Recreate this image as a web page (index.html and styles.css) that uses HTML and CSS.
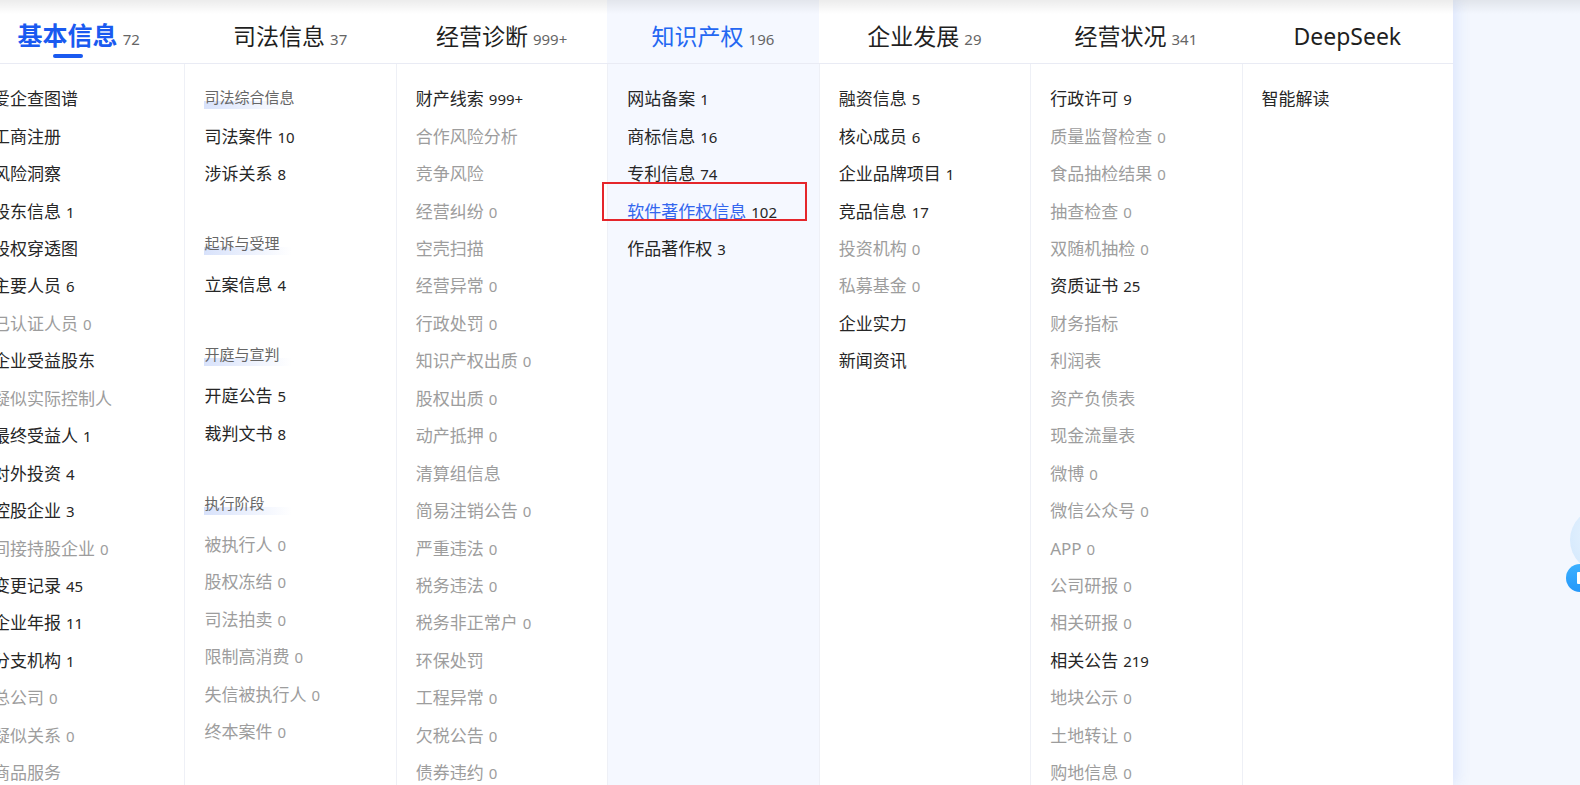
FILE: index.html
```html
<!DOCTYPE html>
<html lang="zh-CN">
<head>
<meta charset="utf-8">
<title>企业信息导航</title>
<link rel="stylesheet" href="styles.css">
</head>
<body>
<div class="topshade"></div>
<div class="panel">
  <section class="col">
    <div class="tab"><span class="tab-title active">基本信息</span><span class="tab-count">72</span></div>
    <ul class="list">
      <li class="item">爱企查图谱</li>
      <li class="item">工商注册</li>
      <li class="item">风险洞察</li>
      <li class="item">股东信息<span class="num">1</span></li>
      <li class="item">股权穿透图</li>
      <li class="item">主要人员<span class="num">6</span></li>
      <li class="item muted">已认证人员<span class="num">0</span></li>
      <li class="item">企业受益股东</li>
      <li class="item muted">疑似实际控制人</li>
      <li class="item">最终受益人<span class="num">1</span></li>
      <li class="item">对外投资<span class="num">4</span></li>
      <li class="item">控股企业<span class="num">3</span></li>
      <li class="item muted">间接持股企业<span class="num">0</span></li>
      <li class="item">变更记录<span class="num">45</span></li>
      <li class="item">企业年报<span class="num">11</span></li>
      <li class="item">分支机构<span class="num">1</span></li>
      <li class="item muted">总公司<span class="num">0</span></li>
      <li class="item muted">疑似关系<span class="num">0</span></li>
      <li class="item muted">商品服务</li>
    </ul>
  </section>
  <section class="col">
    <div class="tab"><span class="tab-title">司法信息</span><span class="tab-count">37</span></div>
    <ul class="list">
      <li class="group-title first">司法综合信息</li>
      <li class="item">司法案件<span class="num">10</span></li>
      <li class="item">涉诉关系<span class="num">8</span></li>
      <li class="group-title">起诉与受理</li>
      <li class="item">立案信息<span class="num">4</span></li>
      <li class="group-title">开庭与宣判</li>
      <li class="item">开庭公告<span class="num">5</span></li>
      <li class="item">裁判文书<span class="num">8</span></li>
      <li class="group-title">执行阶段</li>
      <li class="item muted">被执行人<span class="num">0</span></li>
      <li class="item muted">股权冻结<span class="num">0</span></li>
      <li class="item muted">司法拍卖<span class="num">0</span></li>
      <li class="item muted">限制高消费<span class="num">0</span></li>
      <li class="item muted">失信被执行人<span class="num">0</span></li>
      <li class="item muted">终本案件<span class="num">0</span></li>
    </ul>
  </section>
  <section class="col">
    <div class="tab"><span class="tab-title">经营诊断</span><span class="tab-count">999+</span></div>
    <ul class="list">
      <li class="item">财产线索<span class="num">999+</span></li>
      <li class="item muted">合作风险分析</li>
      <li class="item muted">竞争风险</li>
      <li class="item muted">经营纠纷<span class="num">0</span></li>
      <li class="item muted">空壳扫描</li>
      <li class="item muted">经营异常<span class="num">0</span></li>
      <li class="item muted">行政处罚<span class="num">0</span></li>
      <li class="item muted">知识产权出质<span class="num">0</span></li>
      <li class="item muted">股权出质<span class="num">0</span></li>
      <li class="item muted">动产抵押<span class="num">0</span></li>
      <li class="item muted">清算组信息</li>
      <li class="item muted">简易注销公告<span class="num">0</span></li>
      <li class="item muted">严重违法<span class="num">0</span></li>
      <li class="item muted">税务违法<span class="num">0</span></li>
      <li class="item muted">税务非正常户<span class="num">0</span></li>
      <li class="item muted">环保处罚</li>
      <li class="item muted">工程异常<span class="num">0</span></li>
      <li class="item muted">欠税公告<span class="num">0</span></li>
      <li class="item muted">债券违约<span class="num">0</span></li>
    </ul>
  </section>
  <section class="col hover">
    <div class="tab"><span class="tab-title hl">知识产权</span><span class="tab-count">196</span></div>
    <ul class="list">
      <li class="item">网站备案<span class="num">1</span></li>
      <li class="item">商标信息<span class="num">16</span></li>
      <li class="item">专利信息<span class="num">74</span></li>
      <li class="item link">软件著作权信息<span class="num">102</span></li>
      <li class="item">作品著作权<span class="num">3</span></li>
    </ul>
  </section>
  <section class="col">
    <div class="tab"><span class="tab-title">企业发展</span><span class="tab-count">29</span></div>
    <ul class="list">
      <li class="item">融资信息<span class="num">5</span></li>
      <li class="item">核心成员<span class="num">6</span></li>
      <li class="item">企业品牌项目<span class="num">1</span></li>
      <li class="item">竞品信息<span class="num">17</span></li>
      <li class="item muted">投资机构<span class="num">0</span></li>
      <li class="item muted">私募基金<span class="num">0</span></li>
      <li class="item">企业实力</li>
      <li class="item">新闻资讯</li>
    </ul>
  </section>
  <section class="col">
    <div class="tab"><span class="tab-title">经营状况</span><span class="tab-count">341</span></div>
    <ul class="list">
      <li class="item">行政许可<span class="num">9</span></li>
      <li class="item muted">质量监督检查<span class="num">0</span></li>
      <li class="item muted">食品抽检结果<span class="num">0</span></li>
      <li class="item muted">抽查检查<span class="num">0</span></li>
      <li class="item muted">双随机抽检<span class="num">0</span></li>
      <li class="item">资质证书<span class="num">25</span></li>
      <li class="item muted">财务指标</li>
      <li class="item muted">利润表</li>
      <li class="item muted">资产负债表</li>
      <li class="item muted">现金流量表</li>
      <li class="item muted">微博<span class="num">0</span></li>
      <li class="item muted">微信公众号<span class="num">0</span></li>
      <li class="item muted">APP<span class="num">0</span></li>
      <li class="item muted">公司研报<span class="num">0</span></li>
      <li class="item muted">相关研报<span class="num">0</span></li>
      <li class="item">相关公告<span class="num">219</span></li>
      <li class="item muted">地块公示<span class="num">0</span></li>
      <li class="item muted">土地转让<span class="num">0</span></li>
      <li class="item muted">购地信息<span class="num">0</span></li>
    </ul>
  </section>
  <section class="col">
    <div class="tab"><span class="tab-title">DeepSeek</span></div>
    <ul class="list">
      <li class="item">智能解读</li>
    </ul>
  </section>
</div>
<div class="bubble"></div>
<div class="fab"><span class="fab-glyph"></span></div>
</body>
</html>
```

FILE: styles.css
```css
html, body {
  margin: 0;
  padding: 0;
}
body {
  width: 1580px;
  height: 785px;
  overflow: hidden;
  position: relative;
  background: #f3f7fe;
  font-family: "Noto Sans", "Noto Sans CJK SC", sans-serif;
}
.topshade {
  position: absolute;
  top: 0;
  left: 0;
  width: 1580px;
  height: 14px;
  background: linear-gradient(rgba(0, 0, 0, 0.075), rgba(0, 0, 0, 0));
  pointer-events: none;
  z-index: 5;
}
.panel {
  margin-left: -27px;
  width: 1480px;
  height: 785px;
  background: #fff;
  display: grid;
  grid-template-columns: repeat(7, 1fr);
  box-shadow: 3px 0 14px rgba(70, 120, 240, 0.14);
  position: relative;
  z-index: 1;
}
.col {
  display: flex;
  flex-direction: column;
  min-width: 0;
}
.col.hover {
  background: #f5f8ff;
}
.tab {
  height: 64px;
  box-sizing: border-box;
  padding-top: 16px;
  line-height: 47px;
  text-align: center;
  white-space: nowrap;
  border-bottom: 1px solid #e9ebf4;
}
.tab-title {
  display: inline-block;
  position: relative;
  font-size: 23px;
  line-height: 30px;
  color: #1f1f1f;
}
.tab-title.active {
  font-size: 25px;
  font-weight: 700;
  color: #1a5af0;
}
.tab-title.active::after {
  content: "";
  position: absolute;
  left: 50%;
  top: calc(100% + 4px);
  width: 30px;
  height: 4px;
  margin-left: -15px;
  border-radius: 2px;
  background: #1a5af0;
}
.tab-title.hl {
  color: #2467f2;
}
.tab-count {
  font-size: 15px;
  line-height: 30px;
  color: #666;
  margin-left: 5px;
}
.list {
  list-style: none;
  margin: 0;
  padding: 16.3px 0 0;
  flex: 1;
  border-left: 1px solid #eef0f6;
}
.item {
  height: 37.45px;
  line-height: 37.45px;
  padding-left: 19px;
  font-size: 17px;
  color: #262626;
  white-space: nowrap;
}
.item .num {
  font-size: 15px;
  margin-left: 5px;
}
.item.muted {
  color: #9d9d9d;
}
.item.link {
  color: #3366ee;
  position: relative;
}
.item.link .num {
  color: #262626;
}
.item.link::after {
  content: "";
  position: absolute;
  left: -6px;
  top: -11px;
  width: 205px;
  height: 39px;
  box-sizing: border-box;
  border: 2px solid #e5262b;
}
.group-title {
  height: 22px;
  box-sizing: border-box;
  padding-bottom: 2px;
  margin: 40.3px 0 11.3px 19px;
  font-size: 15px;
  line-height: 20px;
  color: #666;
  white-space: nowrap;
  background: linear-gradient(90deg, #d8e2fb 0%, rgba(216, 226, 251, 0) 100%) no-repeat left bottom / 88px 8px;
}
.group-title.first {
  margin-top: 7px;
  margin-bottom: 8.7px;
}
.bubble {
  position: absolute;
  left: 1570px;
  top: 508px;
  width: 64px;
  height: 64px;
  border-radius: 50%;
  background: radial-gradient(circle at 60% 40%, #eef7ff 0%, #dcedfd 60%, #cfe6fc 100%);
  z-index: 2;
}
.fab {
  position: absolute;
  left: 1566px;
  top: 564px;
  width: 28px;
  height: 28px;
  border-radius: 50%;
  background: linear-gradient(180deg, #3bb0ff, #2498fa);
  z-index: 3;
}
.fab-glyph {
  position: absolute;
  left: 11px;
  top: 8px;
  width: 4px;
  height: 12px;
  background: #fff;
  border-radius: 1px;
}
```
